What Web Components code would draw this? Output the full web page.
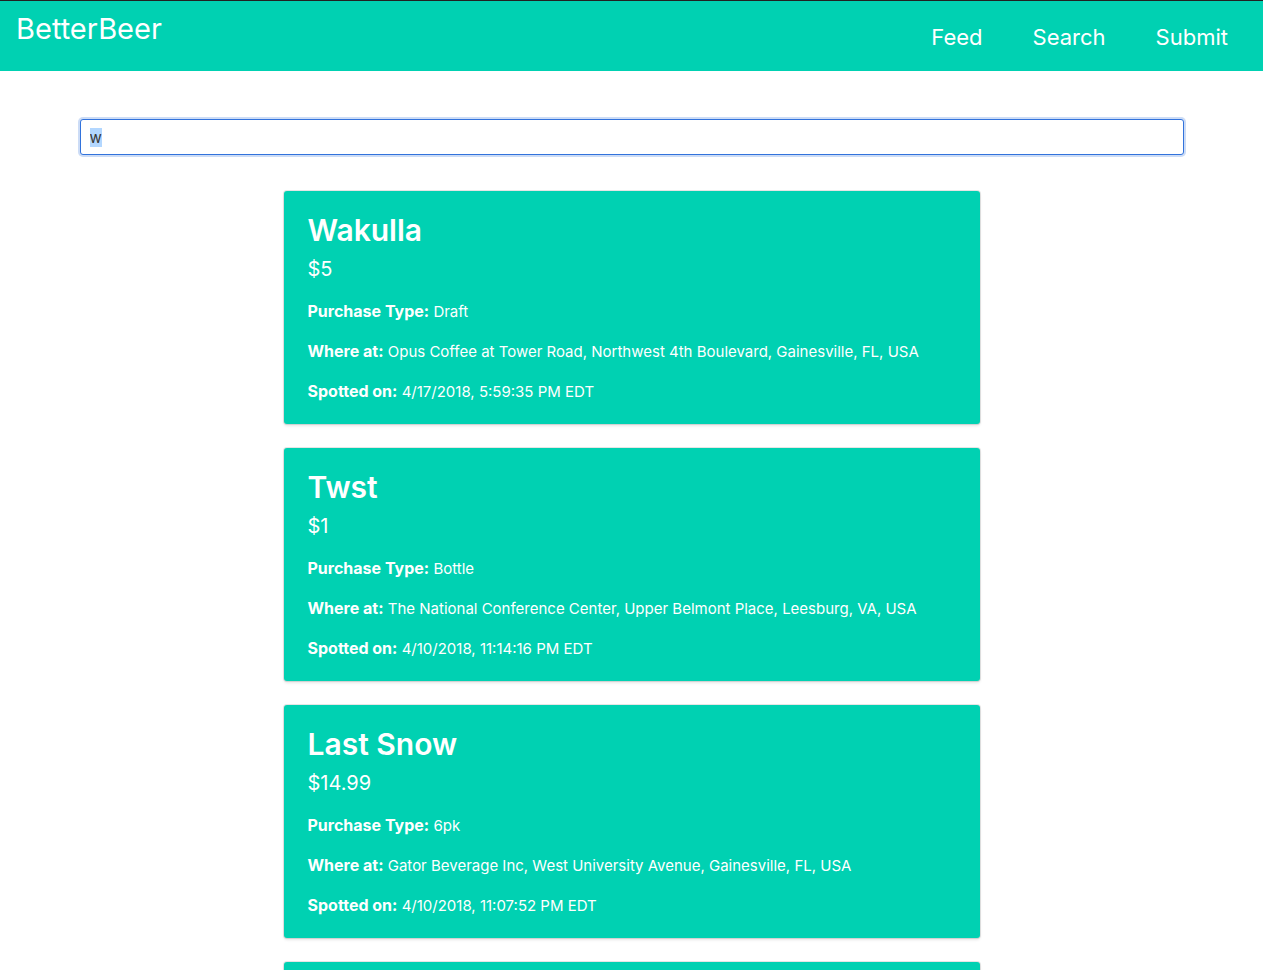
<!DOCTYPE html>
<html lang="en">
<head>
<meta charset="utf-8">
<meta name="viewport" content="width=device-width, initial-scale=1">
<title>BetterBeer</title>
<style>
  :root { --primary: #00d1b2; --link: #3273dc; scrollbar-width: none; }
  body { margin: 0; background: #fff; color: #363636; font-family: Inter, "Liberation Sans", sans-serif; font-size: 15px; line-height: 24px; }
</style>
</head>
<body>
<beer-app></beer-app>
<script>
  const define = (name, html, setup) => customElements.define(name, class extends HTMLElement {
    constructor() {
      super();
      const template = document.createElement('template');
      template.innerHTML = html;
      this.attachShadow({ mode: 'open' }).append(template.content.cloneNode(true));
    }
    connectedCallback() { if (setup) setup(this, this.shadowRoot); }
  });

  define('beer-header', `
    <style>
      :host { display: block; background: var(--primary); color: #fff; border-top: 1px solid #222; }
      header { display: flex; justify-content: space-between; align-items: flex-start; padding: 8px 35px 0 16px; height: 62px; }
      a { color: inherit; text-decoration: none; }
      .brand { font-size: 29px; line-height: 40px; }
      nav { display: flex; gap: 50px; font-size: 22px; line-height: 56px; }
    </style>
    <header>
      <a class="brand" href="#">BetterBeer</a>
      <nav><a href="#feed">Feed</a><a href="#search">Search</a><a href="#submit">Submit</a></nav>
    </header>`);

  define('beer-search', `
    <style>
      :host { display: block; }
      input { display: block; box-sizing: border-box; width: 100%; height: 36px; margin: 0; padding: 0 9px;
        border: 1px solid var(--link); border-radius: 3px; outline: none; background: #fff; color: #363636;
        box-shadow: 0 0 0 2px rgba(50, 115, 220, .25); font: inherit; }
      input::selection { background: #b3d7ff; color: #363636; }
    </style>
    <input type="text" aria-label="Search beers" value="w" autocomplete="off" spellcheck="false">`,
    (host, root) => { const input = root.querySelector('input'); input.focus(); input.select(); });

  define('beer-card', `
    <style>
      :host { display: block; box-sizing: border-box; min-height: 233px; padding: 20px 24px; border-radius: 3px;
        background: var(--primary); color: #fff;
        box-shadow: 0 2px 3px rgba(10, 10, 10, .1), 0 0 0 1px rgba(10, 10, 10, .1); }
      h2 { margin: 0; font-size: 30px; line-height: 38px; font-weight: 600; }
      .price { margin: 8px 0 18px; font-size: 20px; line-height: 25px; }
      .details { display: grid; gap: 16px; }
    </style>
    <h2><slot name="name"></slot></h2>
    <p class="price"><slot name="price"></slot></p>
    <div class="details"><slot></slot></div>`);

  define('beer-detail', `
    <style>
      :host { display: block; }
      p { margin: 0; }
      strong { font-size: 16px; line-height: 16px; font-weight: 700; }
    </style>
    <p><strong></strong> <slot></slot></p>`,
    (host, root) => { root.querySelector('strong').textContent = host.getAttribute('label') + ':'; });

  define('beer-app', `
    <style>
      :host { display: block; }
      main { padding: 48px 32px; }
      beer-search { max-width: 1104px; margin: 0 auto 36px; }
      section { display: grid; gap: 24px; max-width: 696px; margin: 0 auto; }
    </style>
    <beer-header></beer-header>
    <main>
      <beer-search></beer-search>
      <section aria-label="Results">
        <beer-card>
          <span slot="name">Wakulla</span><span slot="price">$5</span>
          <beer-detail label="Purchase Type">Draft</beer-detail>
          <beer-detail label="Where at">Opus Coffee at Tower Road, Northwest 4th Boulevard, Gainesville, FL, USA</beer-detail>
          <beer-detail label="Spotted on">4/17/2018, 5:59:35 PM EDT</beer-detail>
        </beer-card>
        <beer-card>
          <span slot="name">Twst</span><span slot="price">$1</span>
          <beer-detail label="Purchase Type">Bottle</beer-detail>
          <beer-detail label="Where at">The National Conference Center, Upper Belmont Place, Leesburg, VA, USA</beer-detail>
          <beer-detail label="Spotted on">4/10/2018, 11:14:16 PM EDT</beer-detail>
        </beer-card>
        <beer-card>
          <span slot="name">Last Snow</span><span slot="price">$14.99</span>
          <beer-detail label="Purchase Type">6pk</beer-detail>
          <beer-detail label="Where at">Gator Beverage Inc, West University Avenue, Gainesville, FL, USA</beer-detail>
          <beer-detail label="Spotted on">4/10/2018, 11:07:52 PM EDT</beer-detail>
        </beer-card>
        <beer-card></beer-card>
      </section>
    </main>`);
</script>
</body>
</html>
